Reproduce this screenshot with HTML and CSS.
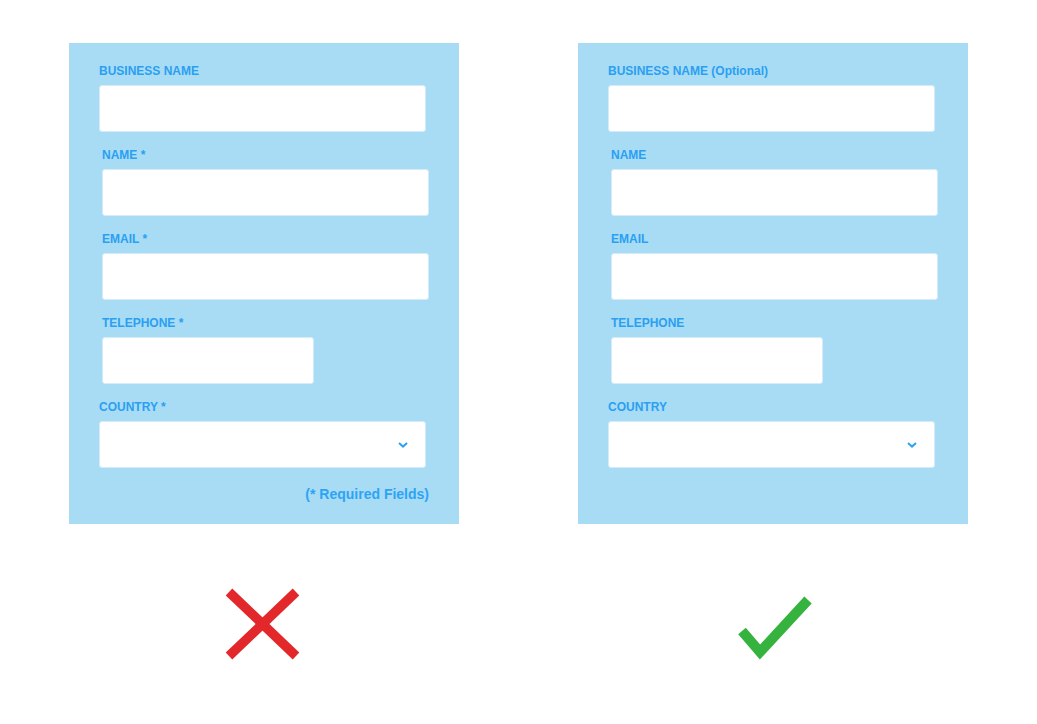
FILE: index.html
```html
<!DOCTYPE html>
<html lang="en">
<head>
<meta charset="utf-8">
<title>Form comparison</title>
<link rel="stylesheet" href="styles.css">
</head>
<body>
<main class="compare">
  <section class="column">
    <form class="panel">
      <div class="field">
        <label class="label">BUSINESS NAME</label>
        <div class="input"></div>
      </div>
      <div class="field shifted">
        <label class="label">NAME *</label>
        <div class="input"></div>
      </div>
      <div class="field shifted">
        <label class="label">EMAIL *</label>
        <div class="input"></div>
      </div>
      <div class="field shifted">
        <label class="label">TELEPHONE *</label>
        <div class="input short"></div>
      </div>
      <div class="field">
        <label class="label">COUNTRY *</label>
        <div class="input select">
          <svg class="chevron" width="10" height="6" viewBox="0 0 10 6"><polyline points="1,1 5,4.6 9,1" fill="none" stroke="#2ea3f5" stroke-width="2"/></svg>
        </div>
      </div>
      <p class="note">(* Required Fields)</p>
    </form>
    <div class="mark">
      <svg width="80" height="76" viewBox="0 0 80 76">
        <line x1="5" y1="6" x2="72" y2="70" stroke="#e2282b" stroke-width="9.5"/>
        <line x1="72" y1="6" x2="5" y2="70" stroke="#e2282b" stroke-width="9.5"/>
      </svg>
    </div>
  </section>
  <section class="column">
    <form class="panel">
      <div class="field">
        <label class="label">BUSINESS NAME (Optional)</label>
        <div class="input"></div>
      </div>
      <div class="field shifted">
        <label class="label">NAME</label>
        <div class="input"></div>
      </div>
      <div class="field shifted">
        <label class="label">EMAIL</label>
        <div class="input"></div>
      </div>
      <div class="field shifted">
        <label class="label">TELEPHONE</label>
        <div class="input short"></div>
      </div>
      <div class="field">
        <label class="label">COUNTRY</label>
        <div class="input select">
          <svg class="chevron" width="10" height="6" viewBox="0 0 10 6"><polyline points="1,1 5,4.6 9,1" fill="none" stroke="#2ea3f5" stroke-width="2"/></svg>
        </div>
      </div>
    </form>
    <div class="mark">
      <svg width="80" height="76" viewBox="0 0 80 76">
        <polyline points="9,45 27,66 75,14" fill="none" stroke="#36b23e" stroke-width="10" stroke-linejoin="miter"/>
      </svg>
    </div>
  </section>
</main>
</body>
</html>
```

FILE: styles.css
```css
html, body {
  margin: 0;
  padding: 0;
  background: #ffffff;
}

body {
  font-family: "Liberation Sans", Arial, sans-serif;
}

.compare {
  display: flex;
  justify-content: center;
  gap: 119px;
  padding-top: 43px;
}

.column {
  width: 390px;
  display: flex;
  flex-direction: column;
}

.panel {
  box-sizing: border-box;
  height: 481px;
  background: #a7dcf4;
  padding: 20px 30px 0 30px;
  margin: 0;
  display: flex;
  flex-direction: column;
}

.field {
  display: flex;
  flex-direction: column;
  margin-bottom: 15px;
}

.field.shifted {
  margin-left: 3px;
}

.label {
  display: block;
  font-size: 12px;
  line-height: 14px;
  font-weight: bold;
  color: #2b9ff2;
  padding-top: 1px;
  margin-bottom: 7px;
}

.input {
  box-sizing: border-box;
  width: 327px;
  height: 47px;
  background: #ffffff;
  border: 1px solid #d4ecf9;
  border-radius: 3px;
}

.input.short {
  width: 212px;
}

.input.select {
  display: flex;
  align-items: center;
  justify-content: flex-end;
  padding-right: 17px;
}

.chevron {
  display: block;
  margin-top: 1px;
}

.note {
  margin: 3px 0 0 0;
  text-align: right;
  font-size: 14px;
  line-height: 16px;
  font-weight: bold;
  color: #2ea3f5;
}

.mark {
  display: flex;
  justify-content: center;
  padding-top: 62px;
}

.mark svg {
  display: block;
}
```
